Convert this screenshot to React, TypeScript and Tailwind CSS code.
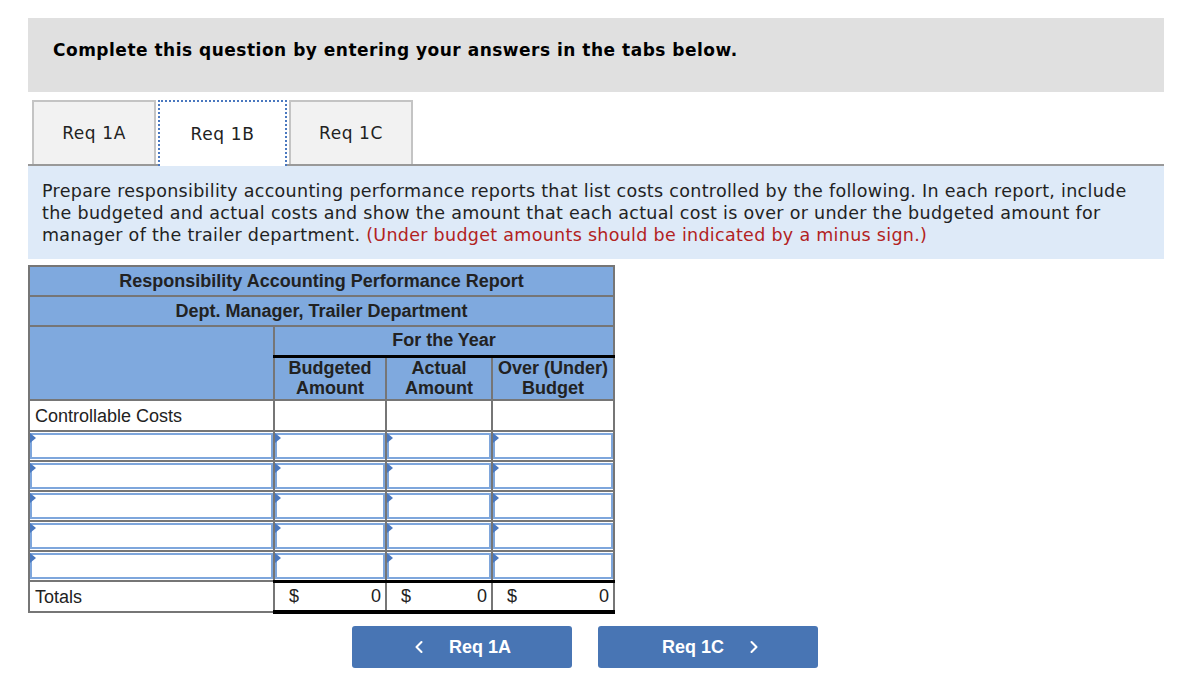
import { ChevronLeft, ChevronRight } from "lucide-react";

const verdana = { fontFamily: '"DejaVu Sans", Verdana, sans-serif' };

function InputBox() {
  return (
    <div className="relative h-[26px] border-2 border-[#7ea6dc] bg-white">
      <span className="absolute -left-[2px] -top-[2px] h-0 w-0 border-y-[5px] border-l-[6px] border-y-transparent border-l-[#4a78bf]" />
    </div>
  );
}

function Tab({ label, active }: { label: string; active?: boolean }) {
  if (active) {
    return (
      <div className="mb-[-2px] flex h-[66px] w-[129px] items-center justify-center border-2 border-b-0 border-dotted border-[#4a78bf] bg-white pt-[2px] text-[17px] tracking-[0.6px] text-[#222]">
        {label}
      </div>
    );
  }
  return (
    <div className="flex h-[64px] w-[124px] items-center justify-center border-2 border-b-0 border-[#c4c4c4] bg-[#f2f2f2] pt-[2px] text-[17px] tracking-[0.6px] text-[#222]">
      {label}
    </div>
  );
}

export default function App() {
  const rows = [0, 1, 2, 3, 4];
  const cell = "border-2 border-[#767676]";
  return (
    <div className="min-h-[692px] w-[1190px] bg-white pt-[18px]">
      <div className="ml-[28px] mr-[26px]" style={verdana}>
        <div className="flex h-[74px] items-center bg-[#e0e0e0] pl-[25px] pb-[8px] text-[17px] font-bold tracking-[0.5px] text-black">
          Complete this question by entering your answers in the tabs below.
        </div>

        <div className="mt-[8px] flex items-end gap-[2px] border-b-2 border-[#999] pl-[4px]">
          <Tab label="Req 1A" />
          <Tab label="Req 1B" active />
          <Tab label="Req 1C" />
        </div>

        <p className="bg-[#deeaf8] px-[14px] pt-[14px] pb-[13px] text-[17.5px] leading-[22px] tracking-[0.3px] text-[#222]">
          Prepare responsibility accounting performance reports that list costs controlled by the following. In each report, include the budgeted and actual costs and show the amount that each actual cost is over or under the budgeted amount for manager of the trailer department.{" "}
          <span className="text-[#b22222]">(Under budget amounts should be indicated by a minus sign.)</span>
        </p>
      </div>

      <div className="ml-[28px] mt-[6px]" style={{ fontFamily: '"Liberation Sans", Arial, sans-serif' }}>
        <table className="w-[585px] table-fixed border-collapse text-[18px] text-[#222]">
          <colgroup>
            <col className="w-[245px]" />
            <col className="w-[112px]" />
            <col className="w-[106px]" />
            <col className="w-[122px]" />
          </colgroup>
          <tbody>
            <tr className="h-[30px] bg-[#7fa9de] font-bold">
              <td colSpan={4} className={`${cell} text-center`}>Responsibility Accounting Performance Report</td>
            </tr>
            <tr className="h-[30px] bg-[#7fa9de] font-bold">
              <td colSpan={4} className={`${cell} text-center`}>Dept. Manager, Trailer Department</td>
            </tr>
            <tr className="h-[30px] bg-[#7fa9de] font-bold">
              <td rowSpan={2} className={cell}></td>
              <td colSpan={3} className="border-2 border-b-[3px] border-[#767676] border-b-black text-center">For the Year</td>
            </tr>
            <tr className="h-[44px] bg-[#7fa9de] font-bold leading-[20px]">
              <td className={`${cell} text-center`}>Budgeted<br />Amount</td>
              <td className={`${cell} text-center`}>Actual<br />Amount</td>
              <td className={`${cell} text-center`}>Over (Under)<br />Budget</td>
            </tr>
            <tr className="h-[30px]">
              <td className={`${cell} px-[5px] pt-[2px]`}>Controllable Costs</td>
              <td className={cell}></td>
              <td className={cell}></td>
              <td className={cell}></td>
            </tr>
            {rows.map((r) => (
              <tr key={r} className="h-[30px]">
                {[0, 1, 2, 3].map((c) => (
                  <td key={c} className={`${cell} p-0`}>
                    <InputBox />
                  </td>
                ))}
              </tr>
            ))}
            <tr className="h-[28px]">
              <td className={`${cell} px-[5px] pt-[2px]`}>Totals</td>
              {[0, 1, 2].map((c) => (
                <td key={c} className="border-x-2 border-t-[3px] border-b-[4px] border-[#767676] border-t-black border-b-black px-[4px]">
                  <div className="flex justify-between pl-[10px]">
                    <span>$</span>
                    <span>0</span>
                  </div>
                </td>
              ))}
            </tr>
          </tbody>
        </table>

        <div className="mt-[12px] flex gap-[26px] pl-[324px]">
          <div className="flex h-[42px] w-[220px] items-center justify-center gap-[20px] rounded-[3px] bg-[#4875b4] pr-[4px] text-[18px] font-bold text-white">
            <ChevronLeft size={20} strokeWidth={2.5} />
            <span>Req 1A</span>
          </div>
          <div className="flex h-[42px] w-[220px] items-center justify-center gap-[20px] rounded-[3px] bg-[#4875b4] pl-[10px] text-[18px] font-bold text-white">
            <span>Req 1C</span>
            <ChevronRight size={20} strokeWidth={2.5} />
          </div>
        </div>
      </div>
    </div>
  );
}
